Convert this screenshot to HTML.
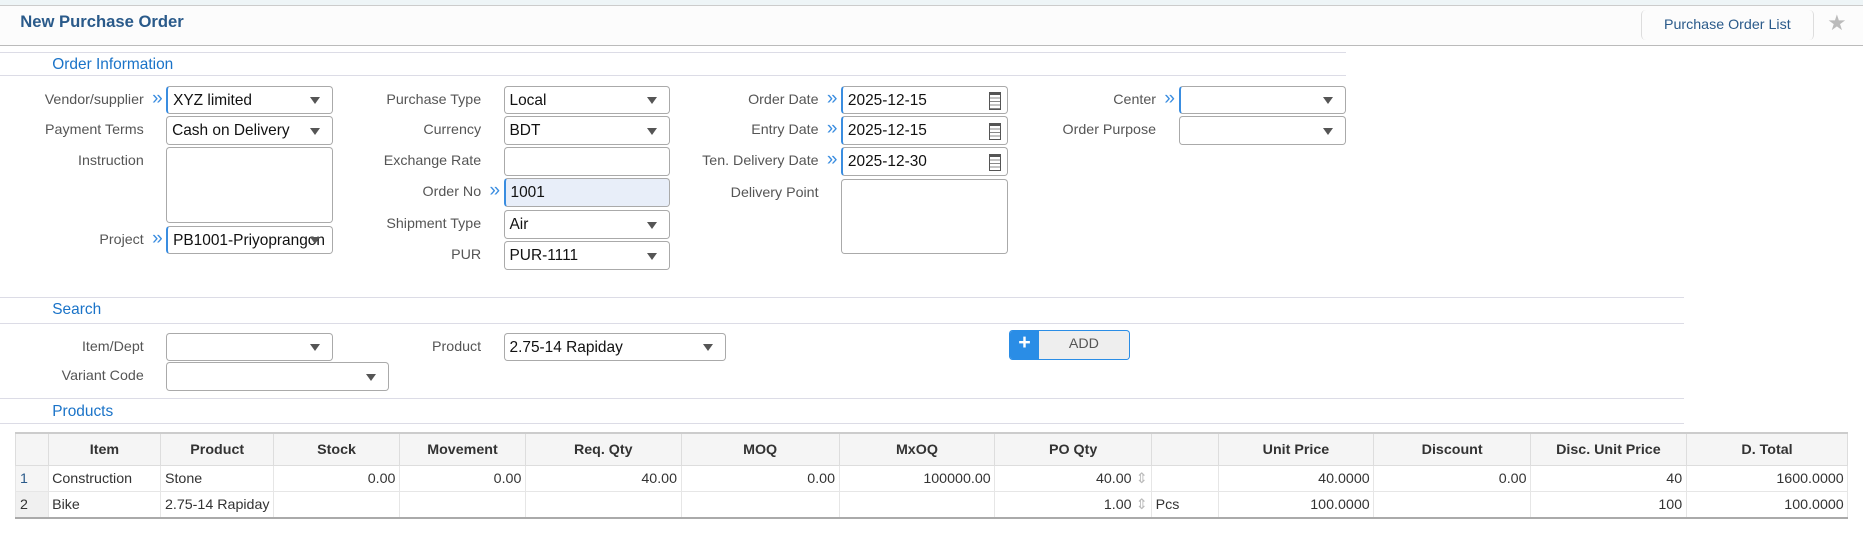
<!DOCTYPE html>
<html><head><meta charset="utf-8"><style>
html,body{margin:0;padding:0;background:#fff;overflow:hidden}
body{zoom:1.1881;width:1568px;height:460px;position:relative;font-family:"Liberation Sans",sans-serif;font-size:12px;color:#333}
.a{position:absolute}
.lbl{position:absolute;text-align:right;color:#555;font-size:12px;line-height:24px}
.in{position:absolute;box-sizing:border-box;border:1px solid #aaa;border-radius:3px;background:#fff;height:24px;line-height:23px;padding-left:4px;font-size:13px;color:#111}
.req{border-left:2px solid #3a8de0}
.dd::after{content:"";position:absolute;right:10px;top:9px;border-left:5px solid transparent;border-right:5px solid transparent;border-top:6px solid #555}
.chev{position:absolute;color:#3a8de0;font-size:16px;line-height:22px}
.hl{position:absolute;height:1px;background:#dcdce6}
.sec{position:absolute;color:#1a73c8;font-size:13px}
.cal{position:absolute;right:5px;top:5px;width:8px;height:11px;border:1px solid #555;border-top-width:3px;background:repeating-linear-gradient(#fff 0 2px,#888 2px 3px)}
table{position:absolute;left:13px;top:364px;border-collapse:collapse;font-size:12px;table-layout:fixed}
th{background:#f5f5f5;height:26px;padding:0;font-weight:bold;color:#333;border:1px solid #ddd;border-top:2px solid #ccc}
td{height:21px;border:1px solid #e6e6e6;padding:0 3px;white-space:nowrap;overflow:hidden}
.r{text-align:right}
tr.last td{border-bottom:2px solid #aaa}
</style></head><body>
<div class="a" style="left:0;top:0;width:1568px;height:4px;background:#eef5f7"></div>
<div class="a" style="left:0;top:4px;width:1568px;height:33px;background:#fcfcfc;border-top:1px solid #ccc;border-bottom:1px solid #bbb"></div>
<div class="a" style="left:17px;top:10px;font-size:14px;font-weight:bold;color:#2a5a8a">New Purchase Order</div>
<div class="a" style="left:1381px;top:8px;width:144px;height:26px;border-left:1px solid #ddd;border-right:1px solid #ddd;border-radius:4px;text-align:center;line-height:26px;color:#2a5a8a;font-size:12px">Purchase Order List</div>
<div class="a" style="left:1538px;top:9px;font-size:18px;color:#bbb">★</div>

<div class="hl" style="left:0;top:44px;width:1133px"></div>
<div class="sec" style="left:44px;top:47px">Order Information</div>
<div class="hl" style="left:0;top:63px;width:1133px"></div>

<div class="lbl" style="left:0;width:121px;top:72px">Vendor/supplier</div><span class="chev" style="left:128px;top:72px">»</span>
<div class="in req dd" style="left:140px;top:72px;width:140px">XYZ limited</div>
<div class="lbl" style="left:0;width:121px;top:98px">Payment Terms</div>
<div class="in dd" style="left:140px;top:98px;width:140px">Cash on Delivery</div>
<div class="lbl" style="left:0;width:121px;top:124px">Instruction</div>
<div class="in" style="left:140px;top:124px;width:140px;height:64px"></div>
<div class="lbl" style="left:0;width:121px;top:190px">Project</div><span class="chev" style="left:128px;top:190px">»</span>
<div class="in req dd" style="left:140px;top:190px;width:140px">PB1001-Priyoprangon</div>

<div class="lbl" style="left:280px;width:125px;top:72px">Purchase Type</div>
<div class="in dd" style="left:424px;top:72px;width:140px">Local</div>
<div class="lbl" style="left:280px;width:125px;top:98px">Currency</div>
<div class="in dd" style="left:424px;top:98px;width:140px">BDT</div>
<div class="lbl" style="left:280px;width:125px;top:124px">Exchange Rate</div>
<div class="in" style="left:424px;top:124px;width:140px"></div>
<div class="lbl" style="left:280px;width:125px;top:150px">Order No</div><span class="chev" style="left:412px;top:150px">»</span>
<div class="in req" style="left:424px;top:150px;width:140px;background:#e8eef9">1001</div>
<div class="lbl" style="left:280px;width:125px;top:177px">Shipment Type</div>
<div class="in dd" style="left:424px;top:177px;width:140px">Air</div>
<div class="lbl" style="left:280px;width:125px;top:203px">PUR</div>
<div class="in dd" style="left:424px;top:203px;width:140px">PUR-1111</div>

<div class="lbl" style="left:560px;width:129px;top:72px">Order Date</div><span class="chev" style="left:696px;top:72px">»</span>
<div class="in req" style="left:708px;top:72px;width:140px">2025-12-15<span class="cal"></span></div>
<div class="lbl" style="left:560px;width:129px;top:98px">Entry Date</div><span class="chev" style="left:696px;top:98px">»</span>
<div class="in req" style="left:708px;top:98px;width:140px">2025-12-15<span class="cal"></span></div>
<div class="lbl" style="left:560px;width:129px;top:124px">Ten. Delivery Date</div><span class="chev" style="left:696px;top:124px">»</span>
<div class="in req" style="left:708px;top:124px;width:140px">2025-12-30<span class="cal"></span></div>
<div class="lbl" style="left:560px;width:129px;top:151px">Delivery Point</div>
<div class="in" style="left:708px;top:151px;width:140px;height:63px"></div>

<div class="lbl" style="left:840px;width:133px;top:72px">Center</div><span class="chev" style="left:980px;top:72px">»</span>
<div class="in req dd" style="left:992px;top:72px;width:141px"></div>
<div class="lbl" style="left:840px;width:133px;top:98px">Order Purpose</div>
<div class="in dd" style="left:992px;top:98px;width:141px"></div>

<div class="hl" style="left:0;top:250px;width:1417px"></div>
<div class="sec" style="left:44px;top:253px">Search</div>
<div class="hl" style="left:0;top:272px;width:1417px"></div>
<div class="lbl" style="left:0;width:121px;top:280px">Item/Dept</div>
<div class="in dd" style="left:140px;top:280px;width:140px"></div>
<div class="lbl" style="left:280px;width:125px;top:280px">Product</div>
<div class="in dd" style="left:424px;top:280px;width:187px">2.75-14 Rapiday</div>
<div class="lbl" style="left:0;width:121px;top:305px">Variant Code</div>
<div class="in dd" style="left:140px;top:305px;width:187px"></div>
<div class="a" style="left:849px;top:278px;width:102px;height:25px;box-sizing:border-box;border:1px solid #2a8de6;border-radius:3px;background:#eee;overflow:hidden">
 <div class="a" style="left:0;top:0;width:25px;height:23px;background:#2a8de6;color:#fff;font-weight:bold;font-size:18px;text-align:center;line-height:20px">+</div>
 <div class="a" style="left:25px;top:0;width:75px;text-align:center;line-height:23px;color:#555">ADD</div>
</div>
<div class="hl" style="left:0;top:335px;width:1417px"></div>
<div class="sec" style="left:44px;top:339px">Products</div>
<div class="hl" style="left:0;top:356px;width:1417px"></div>

<table>
<colgroup><col style="width:27px"><col style="width:95px"><col style="width:93px"><col style="width:106px"><col style="width:106px"><col style="width:131px"><col style="width:133px"><col style="width:131px"><col style="width:132px"><col style="width:56px"><col style="width:131px"><col style="width:132px"><col style="width:131px"><col style="width:136px"></colgroup>
<tr><th></th><th>Item</th><th>Product</th><th>Stock</th><th>Movement</th><th>Req. Qty</th><th>MOQ</th><th>MxOQ</th><th>PO Qty</th><th></th><th>Unit Price</th><th>Discount</th><th>Disc. Unit Price</th><th>D. Total</th></tr>
<tr><td style="background:#f5f5f5;color:#2a5a8a">1</td><td>Construction</td><td>Stone</td><td class="r">0.00</td><td class="r">0.00</td><td class="r">40.00</td><td class="r">0.00</td><td class="r">100000.00</td><td class="r">40.00 <span style="color:#bbb">⇕</span></td><td></td><td class="r">40.0000</td><td class="r">0.00</td><td class="r">40</td><td class="r">1600.0000</td></tr>
<tr class="last"><td style="background:#f0f0f0">2</td><td>Bike</td><td>2.75-14 Rapiday</td><td></td><td></td><td></td><td></td><td></td><td class="r">1.00 <span style="color:#bbb">⇕</span></td><td>Pcs</td><td class="r">100.0000</td><td></td><td class="r">100</td><td class="r">100.0000</td></tr>
</table>
</body></html>
